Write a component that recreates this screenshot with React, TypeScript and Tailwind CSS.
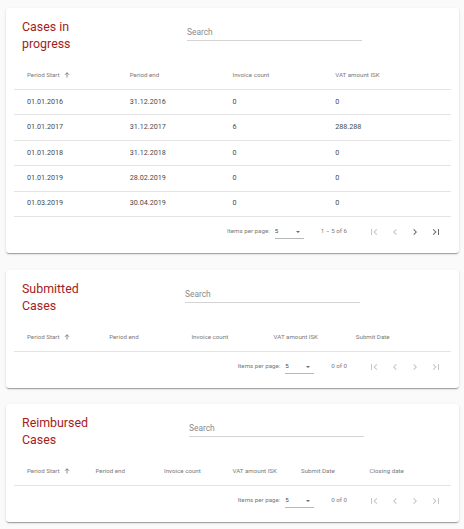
import React from "react"

type Row = string[]

type TableCardProps = {
  title: string
  searchOffset: string
  columns: string[]
  rows: Row[]
  range: string
  canNext: boolean
  className?: string
}

const paths = {
  first: "M18.41 16.59L13.82 12l4.59-4.59L17 6l-6 6 6 6zM6 6h2v12H6z",
  prev: "M15.41 7.41L14 6l-6 6 6 6 1.41-1.41L10.83 12z",
  next: "M10 6L8.59 7.41 13.17 12l-4.58 4.59L10 18l6-6z",
  last: "M5.59 7.41L10.18 12l-4.59 4.59L7 18l6-6-6-6zM16 6h2v12h-2z",
}

function PageButton({ d, enabled }: { d: string; enabled: boolean }) {
  return (
    <div className="w-[20.5px] h-[20.5px] flex items-center justify-center">
      <svg width="12" height="12" viewBox="0 0 24 24" fill={enabled ? "#6b6b6b" : "#c4c4c4"}>
        <path d={d} />
      </svg>
    </div>
  )
}

function SortArrow() {
  return (
    <svg width="6" height="6" viewBox="0 0 12 12" className="ml-[4px]" fill="none" stroke="#6b6b6b" strokeWidth="1.6">
      <path d="M6 11V1.5M2 5.5L6 1.5l4 4" />
    </svg>
  )
}

function TableCard({ title, searchOffset, columns, rows, range, canNext, className }: TableCardProps) {
  const cols = columns.length === 4 ? "grid-cols-4" : columns.length === 5 ? "grid-cols-5" : "grid-cols-6"

  return (
    <div className={`bg-white rounded-[3px] w-[453px] ml-[6px] pt-[10px] pb-[6px] shadow-[0_2px_1px_-1px_rgba(0,0,0,0.2),0_1px_1px_0_rgba(0,0,0,0.14),0_1px_3px_0_rgba(0,0,0,0.12)] ${className ?? ""}`}>
      {/* header: title + search */}
      <div className="flex items-start pl-[16px]">
        <h2 className="w-[90px] text-[12.4px] leading-[17px] text-[#a51c1c] font-normal">{title}</h2>
        <div className={`w-[175px] mt-[9px] pb-[3px] border-b border-[#d4d4d4] ${searchOffset}`}>
          <span className="block text-[8.4px] leading-[10px] text-[#8a8a8a]">Search</span>
        </div>
      </div>

      {/* table */}
      <div className="mx-[8px] mt-[10px]">
        <div className={`grid ${cols} px-[13px] h-[28px] items-center border-b border-[#e4e4e4]`}>
          {columns.map((c, i) => (
            <div key={c} className="flex items-center text-[6.2px] text-[#7a7a7a]">
              {c}
              {i === 0 && <SortArrow />}
            </div>
          ))}
        </div>
        {rows.map((r, i) => (
          <div key={i} className={`grid ${cols} px-[13px] h-[25.4px] items-center border-b border-[#e4e4e4]`}>
            {r.map((cell, j) => (
              <div key={j} className="text-[7.2px] text-[#4a4a4a]">
                {cell}
              </div>
            ))}
          </div>
        ))}
      </div>

      {/* paginator */}
      <div className="flex items-center justify-end h-[30px] pr-[13px] text-[6.2px] text-[#7a7a7a]">
        <span>Items per page:</span>
        <div className="ml-[5px] w-[29px] h-[12px] flex items-center justify-between border-b border-[#b8b8b8] relative top-[1px]">
          <span className="text-[#4a4a4a] relative -top-[1px]">5</span>
          <span className="mr-[4px] w-0 h-0 border-l-[2.5px] border-r-[2.5px] border-t-[2.5px] border-l-transparent border-r-transparent border-t-[#6b6b6b]" />
        </div>
        <span className="ml-[17px]">{range}</span>
        <div className="ml-[17px] flex items-center">
          <PageButton d={paths.first} enabled={false} />
          <PageButton d={paths.prev} enabled={false} />
          <PageButton d={paths.next} enabled={canNext} />
          <PageButton d={paths.last} enabled={canNext} />
        </div>
      </div>
    </div>
  )
}

export default function App() {
  const progressRows = [
    ["01.01.2016", "31.12.2016", "0", "0"],
    ["01.01.2017", "31.12.2017", "6", "288.288"],
    ["01.01.2018", "31.12.2018", "0", "0"],
    ["01.01.2019", "28.02.2019", "0", "0"],
    ["01.03.2019", "30.04.2019", "0", "0"],
  ]

  return (
    <div className="min-h-[529px] bg-[#fafafa] pt-[8px] pb-[6px] font-['Roboto',sans-serif]">
      <TableCard
        title="Cases in progress"
        searchOffset="ml-[75px]"
        columns={["Period Start", "Period end", "Invoice count", "VAT amount ISK"]}
        rows={progressRows}
        range="1 – 5 of 6"
        canNext={true}
      />
      <TableCard
        title="Submitted Cases"
        searchOffset="ml-[73px]"
        columns={["Period Start", "Period end", "Invoice count", "VAT amount ISK", "Submit Date"]}
        rows={[]}
        range="0 of 0"
        canNext={false}
        className="mt-[17px]"
      />
      <TableCard
        title="Reimbursed Cases"
        searchOffset="ml-[77px]"
        columns={["Period Start", "Period end", "Invoice count", "VAT amount ISK", "Submit Date", "Closing date"]}
        rows={[]}
        range="0 of 0"
        canNext={false}
        className="mt-[16px]"
      />
    </div>
  )
}
